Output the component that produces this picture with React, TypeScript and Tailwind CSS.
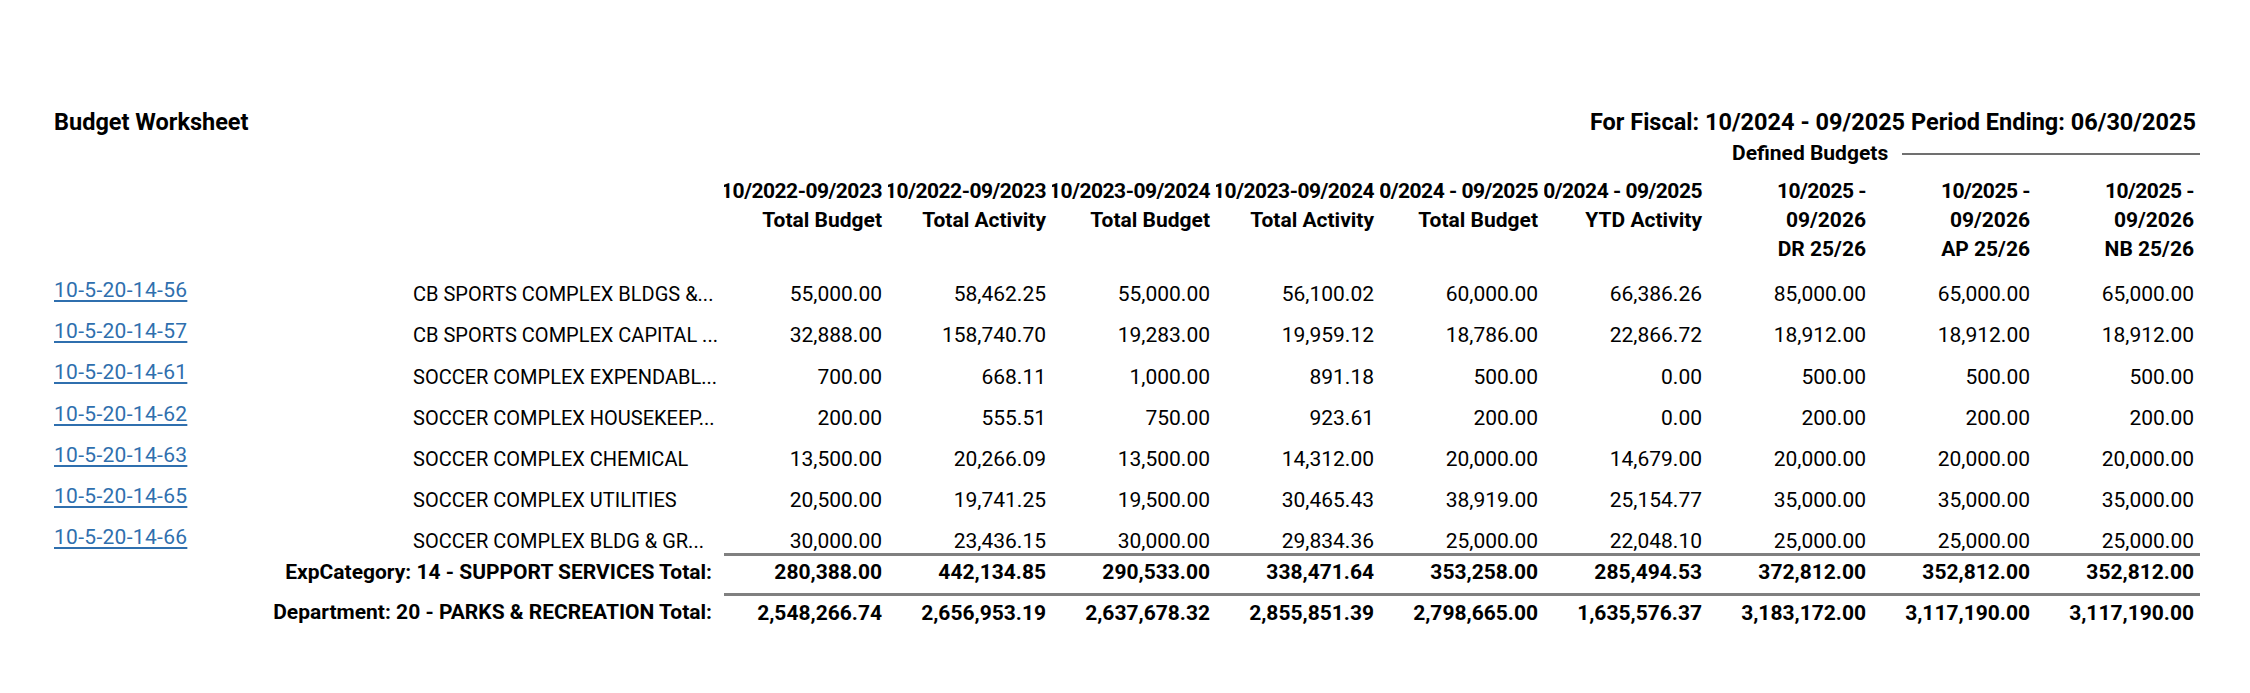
const GRID = "grid grid-cols-[359px_311px_repeat(9,164px)] pl-[54px]";

const rows: { code: string; desc: string; vals: string[] }[] = [
  {
    code: "10-5-20-14-56",
    desc: "CB SPORTS COMPLEX BLDGS &...",
    vals: ["55,000.00", "58,462.25", "55,000.00", "56,100.02", "60,000.00", "66,386.26", "85,000.00", "65,000.00", "65,000.00"],
  },
  {
    code: "10-5-20-14-57",
    desc: "CB SPORTS COMPLEX CAPITAL ...",
    vals: ["32,888.00", "158,740.70", "19,283.00", "19,959.12", "18,786.00", "22,866.72", "18,912.00", "18,912.00", "18,912.00"],
  },
  {
    code: "10-5-20-14-61",
    desc: "SOCCER COMPLEX EXPENDABL...",
    vals: ["700.00", "668.11", "1,000.00", "891.18", "500.00", "0.00", "500.00", "500.00", "500.00"],
  },
  {
    code: "10-5-20-14-62",
    desc: "SOCCER COMPLEX HOUSEKEEP...",
    vals: ["200.00", "555.51", "750.00", "923.61", "200.00", "0.00", "200.00", "200.00", "200.00"],
  },
  {
    code: "10-5-20-14-63",
    desc: "SOCCER COMPLEX CHEMICAL",
    vals: ["13,500.00", "20,266.09", "13,500.00", "14,312.00", "20,000.00", "14,679.00", "20,000.00", "20,000.00", "20,000.00"],
  },
  {
    code: "10-5-20-14-65",
    desc: "SOCCER COMPLEX UTILITIES",
    vals: ["20,500.00", "19,741.25", "19,500.00", "30,465.43", "38,919.00", "25,154.77", "35,000.00", "35,000.00", "35,000.00"],
  },
  {
    code: "10-5-20-14-66",
    desc: "SOCCER COMPLEX BLDG & GR...",
    vals: ["30,000.00", "23,436.15", "30,000.00", "29,834.36", "25,000.00", "22,048.10", "25,000.00", "25,000.00", "25,000.00"],
  },
];

const headers: string[][] = [
  ["10/2022-09/2023", "Total Budget"],
  ["10/2022-09/2023", "Total Activity"],
  ["10/2023-09/2024", "Total Budget"],
  ["10/2023-09/2024", "Total Activity"],
  ["10/2024 - 09/2025", "Total Budget"],
  ["10/2024 - 09/2025", "YTD Activity"],
  ["10/2025 -", "09/2026", "DR 25/26"],
  ["10/2025 -", "09/2026", "AP 25/26"],
  ["10/2025 -", "09/2026", "NB 25/26"],
];

const catTotal = ["280,388.00", "442,134.85", "290,533.00", "338,471.64", "353,258.00", "285,494.53", "372,812.00", "352,812.00", "352,812.00"];
const deptTotal = ["2,548,266.74", "2,656,953.19", "2,637,678.32", "2,855,851.39", "2,798,665.00", "1,635,576.37", "3,183,172.00", "3,117,190.00", "3,117,190.00"];

function HeadCell({ lines }: { lines: string[] }) {
  return (
    <div className="flex flex-col items-end overflow-hidden pr-[6px] text-[21px] font-bold leading-[29px]">
      {lines.map((l, i) => (
        <span key={i} className={"shrink-0 whitespace-nowrap " + (i === 0 ? "tracking-[-0.5px]" : "")}>
          {l}
        </span>
      ))}
    </div>
  );
}

function TotalRow({ label, vals, last }: { label: string; vals: string[]; last?: boolean }) {
  return (
    <div className={GRID}>
      <div className="col-span-2 whitespace-nowrap pt-[7px] pr-[12px] text-right text-[21px] font-bold leading-[24px]">{label}</div>
      {vals.map((v, i) => (
        <div
          key={i}
          className={
            "border-t-[3px] border-[#808080] pr-[6px] text-right text-[21px] font-bold leading-[24px] " +
            (last ? "pt-[5px] pb-[8px]" : "pt-[4px] pb-[9px]")
          }
        >
          {v}
        </div>
      ))}
    </div>
  );
}

export default function App() {
  return (
    <div className="min-h-[693px] w-[2250px] bg-white pt-[107px] font-['Roboto','Liberation_Sans',sans-serif] text-black">
      {/* report title */}
      <div className="flex h-[31px] w-[2200px] items-center justify-between pl-[54px] pr-[4px] text-[23.5px] font-bold">
        <span>Budget Worksheet</span>
        <span>For Fiscal: 10/2024 - 09/2025 Period Ending: 06/30/2025</span>
      </div>

      {/* group header */}
      <div className={GRID + " h-[30px]"}>
        <div className="col-span-3 col-start-9 flex items-center pl-[24px]">
          <span className="text-[21px] font-bold">Defined Budgets</span>
          <div className="ml-[14px] h-[2px] flex-1 bg-[#707070]" />
        </div>
      </div>

      {/* column headers */}
      <div className={GRID + " mt-[9px]"}>
        <div />
        <div />
        {headers.map((h, i) => (
          <HeadCell key={i} lines={h} />
        ))}
      </div>

      {/* account rows */}
      <div className="mt-[1px]">
        {rows.map((r) => (
          <div key={r.code} className={GRID}>
            <div className="pt-[13px]">
              <a className="text-[21px] leading-[24px] tracking-[0.3px] text-[#2f6fae] underline decoration-[1.5px] underline-offset-[3px]">
                {r.code}
              </a>
            </div>
            <div className="whitespace-nowrap pt-[17.2px] text-[20px] leading-[24px]">{r.desc}</div>
            {r.vals.map((v, i) => (
              <div key={i} className="pt-[17.2px] pr-[6px] text-right text-[21px] leading-[24px]">
                {v}
              </div>
            ))}
          </div>
        ))}
      </div>

      <TotalRow label="ExpCategory: 14 - SUPPORT SERVICES Total:" vals={catTotal} />
      <TotalRow label="Department: 20 - PARKS & RECREATION Total:" vals={deptTotal} last />
    </div>
  );
}
